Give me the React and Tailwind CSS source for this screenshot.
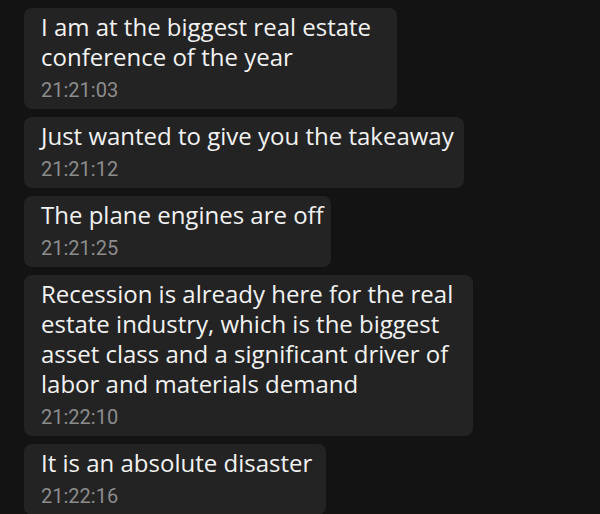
const messages = [
  { lines: ["I am at the biggest real estate", "conference of the year"], time: "21:21:03", w: "w-[373px]" },
  { lines: ["Just wanted to give you the takeaway"], time: "21:21:12", w: "w-[440px]" },
  { lines: ["The plane engines are off"], time: "21:21:25", w: "w-[307px]" },
  {
    lines: [
      "Recession is already here for the real",
      "estate industry, which is the biggest",
      "asset class and a significant driver of",
      "labor and materials demand",
    ],
    time: "21:22:10",
    w: "w-[449px]",
  },
  { lines: ["It is an absolute disaster"], time: "21:22:16", w: "w-[302px]" },
];

export default function App() {
  return (
    <div className="w-[600px] h-[514px] overflow-hidden bg-[#131313] pt-2 pl-6 flex flex-col gap-2">
      {messages.map((m) => (
        <div key={m.time} className={`${m.w} shrink-0 rounded-lg bg-[#232323] pl-[17px] pr-3 pt-1 pb-[7px]`}>
          <div
            className="text-[24px] leading-[30px] text-[#f2f2f2] whitespace-nowrap"
            style={{ fontFamily: '"Open Sans", sans-serif' }}
          >
            {m.lines.map((l, i) => (
              <div key={i}>{l}</div>
            ))}
          </div>
          <div
            className="mt-[6px] text-[20px] leading-[24px] text-[#8c8c8c]"
            style={{ fontFamily: "Roboto, sans-serif" }}
          >
            {m.time}
          </div>
        </div>
      ))}
    </div>
  );
}
